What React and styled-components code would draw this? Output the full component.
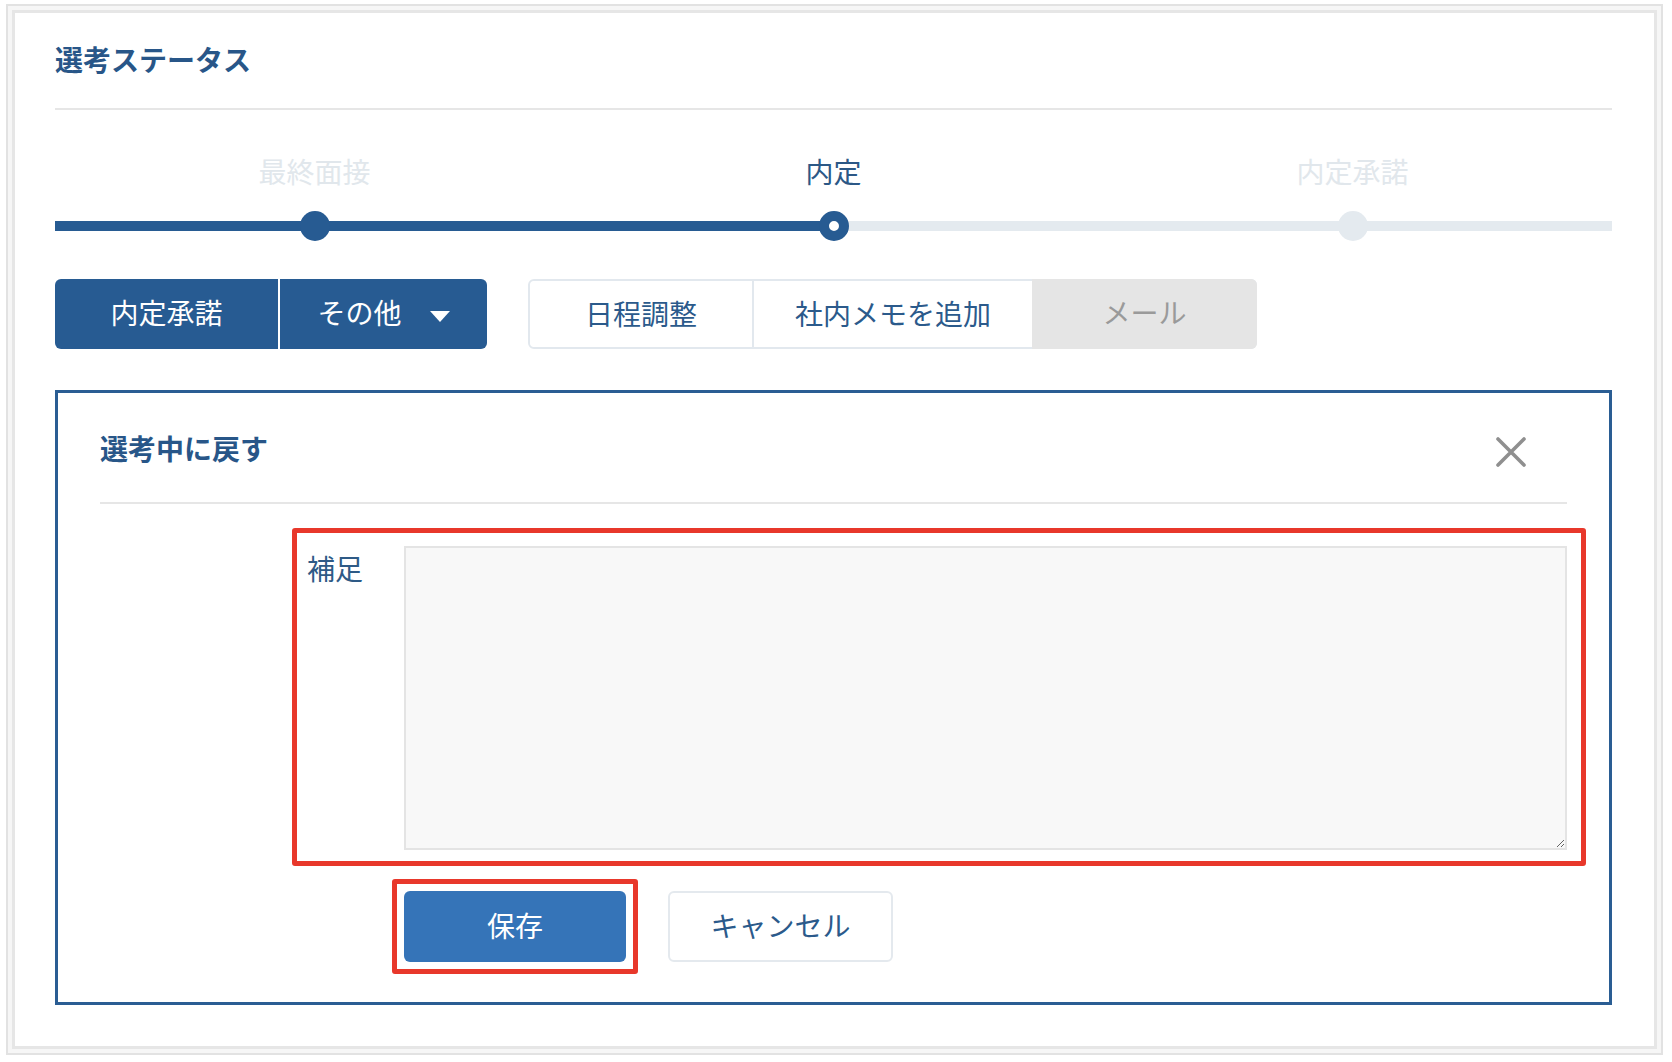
import React from 'react'
import styled, { createGlobalStyle } from 'styled-components'

const GlobalStyle = createGlobalStyle`
  body {
    margin: 0;
    background: #fff;
    font-family: "Noto Sans CJK JP", "Noto Sans", sans-serif;
  }
  * { box-sizing: border-box; }
`

const NAVY = '#275b92'
const TEXT = '#2b5a8b'

const Frame = styled.div`
  margin: 4px 0 0 6px;
  width: 1657px;
  border: 2px solid #e2e2e2;
  background: #f6f6f6;
  padding: 4px;
`

const Sheet = styled.section`
  background: #fff;
  border: 3px solid #e6e6e6;
  padding: 0 42px 41px 40px;
`

const SheetHeader = styled.header`
  height: 97px;
  padding-bottom: 4px;
  display: flex;
  align-items: center;
  border-bottom: 2px solid #e6e6e6;
`

const Title = styled.h2`
  margin: 0;
  font-size: 28px;
  line-height: 1;
  font-weight: 700;
  color: #285688;
`

const StepLabels = styled.div`
  margin-top: 41px;
  display: grid;
  grid-template-columns: repeat(3, 1fr);
`

const StepLabel = styled.div`
  text-align: center;
  font-size: 28px;
  line-height: 40px;
  color: ${p => (p.$active ? '#2c5886' : '#e1e7ec')};
`

const Track = styled.div`
  position: relative;
  margin-top: 20px;
  height: 30px;
  display: grid;
  grid-template-columns: repeat(3, 1fr);
  align-items: center;
  justify-items: center;

  &::before,
  &::after {
    content: '';
    position: absolute;
    left: 0;
    top: 10px;
    height: 10px;
  }
  &::before {
    right: 0;
    background: #e4eaef;
  }
  &::after {
    width: ${p => p.$progress}%;
    background: ${NAVY};
  }
`

const dotStyles = {
  done: `background: ${NAVY};`,
  current: `background: #fff; border: 10px solid ${NAVY};`,
  todo: `background: #e4eaef;`,
}

const Dot = styled.span`
  position: relative;
  z-index: 1;
  width: 30px;
  height: 30px;
  border-radius: 50%;
  ${p => dotStyles[p.$state]}
`

const ActionRow = styled.div`
  margin-top: 38px;
  display: flex;
  gap: 41px;
`

const SolidGroup = styled.div`
  display: flex;
  height: 70px;
  border-radius: 6px;
  overflow: hidden;
  background: ${NAVY};
`

const SolidButton = styled.button`
  width: ${p => p.$w}px;
  border: none;
  border-left: ${p => (p.$split ? '2px solid #fff' : 'none')};
  background: transparent;
  color: #fff;
  font-family: inherit;
  font-size: 28px;
  display: flex;
  align-items: center;
  justify-content: center;
  gap: 28px;
  padding: 0 0 4px;
`

const Caret = styled.span`
  width: 0;
  height: 0;
  border-left: 10px solid transparent;
  border-right: 10px solid transparent;
  border-top: 11px solid #fff;
  margin-top: 8px;
`

const OutlineGroup = styled.div`
  display: flex;
  height: 70px;
  border: 2px solid #e2e8ee;
  border-radius: 6px;
`

const OutlineButton = styled.button`
  width: ${p => p.$w}px;
  border: none;
  border-left: ${p => (p.$split ? '2px solid #e2e8ee' : 'none')};
  background: #fff;
  border-radius: ${p => (p.$first ? '5px 0 0 5px' : '0')};
  color: ${TEXT};
  font-family: inherit;
  font-size: 28px;
  padding: 0 0 2px;
`

const MutedButton = styled.button`
  width: ${p => p.$w}px;
  margin: -2px -2px -2px 0;
  border: none;
  border-radius: 0 6px 6px 0;
  background: #e5e5e5;
  color: #9a9a9a;
  font-family: inherit;
  font-size: 28px;
  padding: 0 0 4px;
`

const Panel = styled.section`
  margin-top: 41px;
  border: 3px solid #2a5d93;
  padding: 0 42px 28px;
`

const PanelHeader = styled.header`
  height: 111px;
  display: flex;
  align-items: center;
  justify-content: space-between;
  border-bottom: 2px solid #e6e6e6;
`

const PanelTitle = styled.h3`
  margin: 0;
  font-size: 28px;
  line-height: 1;
  font-weight: 700;
  color: #285688;
`

const CloseButton = styled.button`
  margin: 8px 41px 0 0;
  width: 30px;
  height: 30px;
  padding: 0;
  border: none;
  background: none;
  display: flex;
`

const Highlight = styled.div`
  border: 5px solid #e8382b;
  border-radius: 3px;
`

const FieldBox = styled(Highlight)`
  margin: 24px -19px 0 192px;
  padding: 13px 14px 11px 10px;
  display: flex;
`

const FieldLabel = styled.label`
  width: 97px;
  flex: none;
  padding-top: 2px;
  font-size: 28px;
  line-height: 40px;
  color: #2e5a86;
`

const Note = styled.textarea`
  flex: 1;
  height: 304px;
  background: #f8f8f8;
  border: 2px solid #e4e4e4;
  resize: vertical;
  font-family: inherit;
  font-size: 20px;
`

const FormActions = styled.div`
  margin: 13px 0 0 292px;
  display: flex;
  align-items: center;
  gap: 30px;
`

const SaveBox = styled(Highlight)`
  padding: 7px;
`

const SaveButton = styled.button`
  display: block;
  width: 222px;
  height: 71px;
  padding: 0 0 4px;
  border: none;
  border-radius: 6px;
  background: #3574b8;
  color: #fff;
  font-family: inherit;
  font-size: 28px;
`

const CancelButton = styled.button`
  width: 225px;
  height: 71px;
  padding: 0 0 4px;
  border: 2px solid #e4e9ee;
  border-radius: 6px;
  background: #fff;
  color: ${TEXT};
  font-family: inherit;
  font-size: 28px;
`

const steps = [
  { label: '最終面接', state: 'done' },
  { label: '内定', state: 'current' },
  { label: '内定承諾', state: 'todo' },
]

const CloseIcon = () => (
  <svg width="30" height="30" viewBox="0 0 30 30">
    <path d="M2 2 L28 28 M28 2 L2 28" stroke="#8f8f8f" strokeWidth="3.6" strokeLinecap="round" />
  </svg>
)

const App = () => (
  <>
    <GlobalStyle />
    <Frame>
      <Sheet>
        <SheetHeader>
          <Title>選考ステータス</Title>
        </SheetHeader>

        <StepLabels>
          {steps.map(s => (
            <StepLabel key={s.label} $active={s.state === 'current'}>{s.label}</StepLabel>
          ))}
        </StepLabels>
        <Track $progress={50}>
          {steps.map(s => <Dot key={s.label} $state={s.state} />)}
        </Track>

        <ActionRow>
          <SolidGroup>
            <SolidButton $w={223}>内定承諾</SolidButton>
            <SolidButton $w={209} $split>
              その他
              <Caret />
            </SolidButton>
          </SolidGroup>
          <OutlineGroup>
            <OutlineButton $w={222} $first>日程調整</OutlineButton>
            <OutlineButton $w={280} $split>社内メモを追加</OutlineButton>
            <MutedButton $w={225}>メール</MutedButton>
          </OutlineGroup>
        </ActionRow>

        <Panel>
          <PanelHeader>
            <PanelTitle>選考中に戻す</PanelTitle>
            <CloseButton aria-label="閉じる"><CloseIcon /></CloseButton>
          </PanelHeader>

          <FieldBox>
            <FieldLabel htmlFor="note">補足</FieldLabel>
            <Note id="note" />
          </FieldBox>

          <FormActions>
            <SaveBox>
              <SaveButton>保存</SaveButton>
            </SaveBox>
            <CancelButton>キャンセル</CancelButton>
          </FormActions>
        </Panel>
      </Sheet>
    </Frame>
  </>
)

export default App
